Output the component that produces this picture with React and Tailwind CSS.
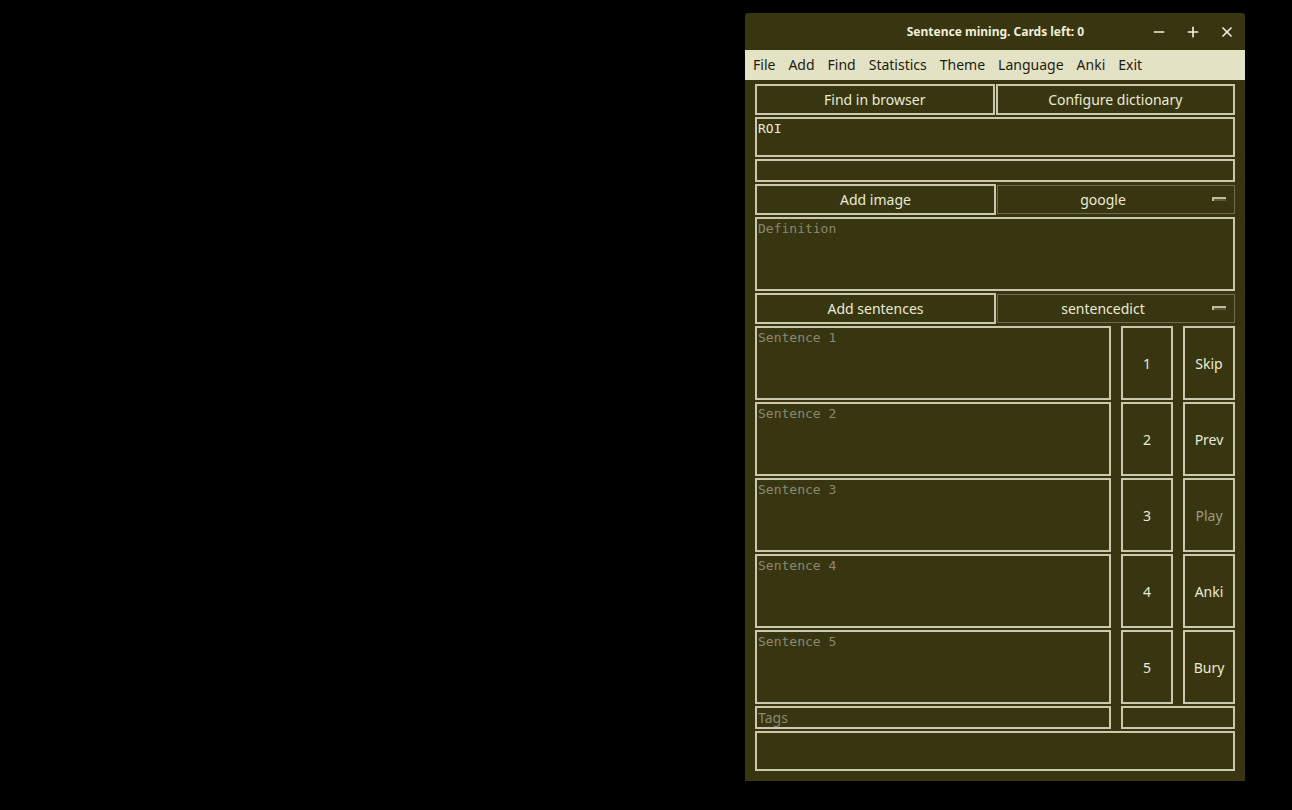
import { Minus, Plus, X } from "lucide-react";

const menu = ["File", "Add", "Find", "Statistics", "Theme", "Language", "Anki", "Exit"];

const sentences = [
  { n: "1", action: "Skip" },
  { n: "2", action: "Prev" },
  { n: "3", action: "Play", muted: true },
  { n: "4", action: "Anki" },
  { n: "5", action: "Bury" },
];

const box = "border-2 border-[#cbc9ad] bg-[#373610]";
const mono = "font-['DejaVu_Sans_Mono',monospace] text-[13px]";

const Btn = ({ children, className = "", muted }) => (
  <div
    className={`${box} flex items-center justify-center text-[14px] ${
      muted ? "text-[#9c9a84]" : "text-[#ecead4]"
    } ${className}`}
  >
    {children}
  </div>
);

const Dropdown = ({ label }) => (
  <div className="relative flex-1 h-[29px] mt-px border border-[#6e6c50] bg-[#373610] flex items-center justify-center pr-[26px] text-[14px] text-[#ecead4]">
    {label}
    <span className="absolute right-[8px] top-[11px] w-[14px] h-[4px] border-t-2 border-l-2 border-[#bdbba0] bg-[#5a5838]" />
  </div>
);

const Field = ({ placeholder, value, className = "" }) => (
  <div className={`${box} ${mono} px-[1px] leading-[18px] ${className}`}>
    {value ? (
      <span className="text-[#ecead4]">{value}</span>
    ) : (
      <span className="text-[#8a8872]">{placeholder}</span>
    )}
  </div>
);

export default function App() {
  return (
    <div className="min-h-[810px] w-full bg-black font-['Noto_Sans',sans-serif]">
      <div className="flex justify-end pr-[47px] pt-[13px]">
        <div className="w-[500px] h-[768px] bg-[#373610] rounded-t-[3px] flex flex-col">
          {/* title bar */}
          <div className="h-[37px] flex items-center relative text-[#f0eed8]">
            <div className="flex-1 text-center font-bold text-[12px] pl-[1px]">
              Sentence mining. Cards left: 0
            </div>
            <div className="absolute right-[10px] top-[11px] flex gap-[18px]">
              <Minus size={16} strokeWidth={2.5} />
              <Plus size={16} strokeWidth={2.5} />
              <X size={16} strokeWidth={2.5} />
            </div>
          </div>

          {/* menu bar */}
          <div className="h-[30px] bg-[#e4e2c4] flex items-center gap-[13px] px-[8px] pb-[1px] text-[14px] text-[#1c1c10]">
            {menu.map((m) => (
              <span key={m}>{m}</span>
            ))}
          </div>

          <div className="flex-1 px-[10px] pt-[4px] flex flex-col gap-[2px]">
            <div className="flex gap-px h-[31px]">
              <Btn className="flex-1">Find in browser</Btn>
              <Btn className="flex-1">Configure dictionary</Btn>
            </div>

            <Field value="ROI" className="h-[40px] pt-[1px]" />
            <Field className="h-[23px]" />

            <div className="flex gap-px h-[31px]">
              <Btn className="w-[241px]">Add image</Btn>
              <Dropdown label="google" />
            </div>

            <Field placeholder="Definition" className="h-[74px] pt-[1px]" />

            <div className="flex gap-px h-[31px]">
              <Btn className="w-[241px]">Add sentences</Btn>
              <Dropdown label="sentencedict" />
            </div>

            {sentences.map((s) => (
              <div key={s.n} className="flex h-[74px] gap-[10px]">
                <Field placeholder={`Sentence ${s.n}`} className="w-[356px] pt-[1px]" />
                <Btn className="w-[52px]">{s.n}</Btn>
                <Btn className="w-[52px]" muted={s.muted}>
                  {s.action}
                </Btn>
              </div>
            ))}

            <div className="flex h-[23px] gap-[10px]">
              <div className={`${box} w-[356px] text-[14px] leading-[19px] px-[1px] text-[#8a8872]`}>
                Tags
              </div>
              <div className={`${box} flex-1`} />
            </div>

            <div className={`${box} h-[40px]`} />
          </div>
        </div>
      </div>
    </div>
  );
}
